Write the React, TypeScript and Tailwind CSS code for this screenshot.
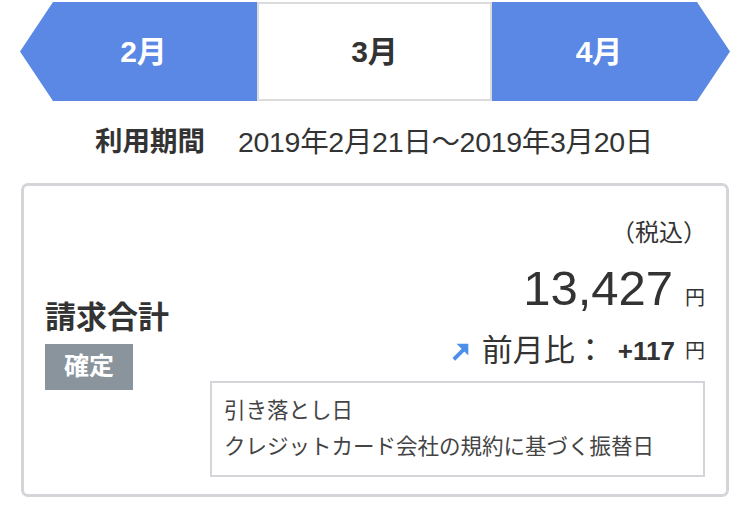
import React from 'react'

const font = { fontFamily: '"Liberation Sans", "Noto Sans CJK JP", sans-serif' }

function MonthTabs() {
  return (
    <div className="flex pt-[2px] h-[101px]">
      {/* 前月 */}
      <div className="ml-[20px] w-[237px] h-full bg-[#5a88e4] [clip-path:polygon(33px_0,100%_0,100%_100%,33px_100%,0_50%)] flex items-center justify-center pl-[10px]">
        <span className="text-white text-[30px] font-bold">2月</span>
      </div>
      {/* 当月 */}
      <div className="w-[235px] h-full bg-white border-2 border-[#dcdcdc] flex items-center justify-center">
        <span className="text-[#333] text-[30px] font-bold">3月</span>
      </div>
      {/* 翌月 */}
      <div className="w-[238px] h-full bg-[#5a88e4] [clip-path:polygon(0_0,calc(100%-33px)_0,100%_50%,calc(100%-33px)_100%,0_100%)] flex items-center justify-center pr-[24px]">
        <span className="text-white text-[30px] font-bold">4月</span>
      </div>
    </div>
  )
}

function UpArrow() {
  return (
    <svg width="19" height="19" viewBox="0 0 17 17" className="mr-[12px]">
      <path d="M2.5 15.5 L13 5" stroke="#4b8fe9" strokeWidth="3.4" strokeLinecap="butt" />
      <polygon points="5,1.5 15.5,1.5 15.5,12" fill="#4b8fe9" />
    </svg>
  )
}

export default function App() {
  return (
    <div className="w-[750px] h-[527px] bg-white text-[#333] overflow-hidden" style={font}>
      <MonthTabs />

      {/* 利用期間 */}
      <div className="flex items-center justify-center h-[82px] pr-[2px]">
        <span className="text-[27.5px] font-bold mr-[33px]">利用期間</span>
        <span className="text-[28.5px] tracking-[-0.3px]">2019年2月21日～2019年3月20日</span>
      </div>

      {/* 請求合計カード */}
      <div className="mx-[21px] border-[3px] border-[#d3d5d9] rounded-[7px] h-[314px] flex items-center pl-[21px] pr-[21px]">
        <div className="flex flex-col items-start w-[165px] mt-[8px]">
          <div className="text-[31px] font-bold leading-[40px] text-[#333]">請求合計</div>
          <div className="mt-[6px] w-[88px] h-[46px] bg-[#8a949d] flex items-center justify-center">
            <span className="text-white text-[25px] font-bold">確定</span>
          </div>
        </div>

        <div className="flex-1 flex flex-col items-end self-stretch pt-[32px]">
          <div className="text-[24px] leading-[30px] text-[#333] mr-[-2px]">（税込）</div>
          <div className="flex items-baseline mt-[12px] leading-[56px]">
            <span className="text-[49px] text-[#333]">13,427</span>
            <span className="text-[20px] ml-[12px]">円</span>
          </div>
          <div className="flex items-center mt-[5px] leading-[40px]">
            <UpArrow />
            <span className="text-[31px]">前月比：</span>
            <span className="text-[26px] font-semibold ml-[12px]">+117</span>
            <span className="text-[20px] ml-[10px]">円</span>
          </div>
          <div className="mt-[10px] w-[495px] h-[96px] border-2 border-[#d3d5d9] px-[12px] pt-[10px] text-[21.5px] leading-[36px] text-[#444]">
            <div>引き落とし日</div>
            <div>クレジットカード会社の規約に基づく振替日</div>
          </div>
        </div>
      </div>
    </div>
  )
}
